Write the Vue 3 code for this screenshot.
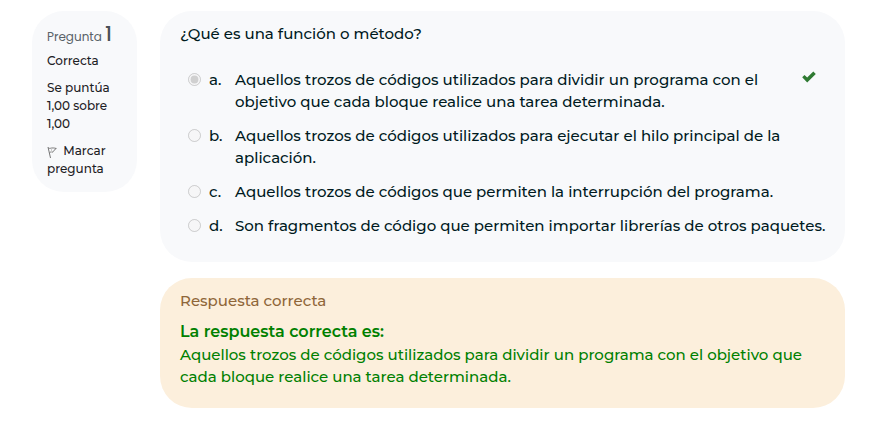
<script setup>
import { ref } from 'vue'

const selected = ref('a')
const options = [
  {
    key: 'a',
    text: 'Aquellos trozos de códigos utilizados para dividir un programa con el objetivo que cada bloque realice una tarea determinada.',
    correct: true,
  },
  {
    key: 'b',
    text: 'Aquellos trozos de códigos utilizados para ejecutar el hilo principal de la aplicación.',
  },
  {
    key: 'c',
    text: 'Aquellos trozos de códigos que permiten la interrupción del programa.',
  },
  {
    key: 'd',
    text: 'Son fragmentos de código que permiten importar librerías de otros paquetes.',
  },
]
</script>

<template>
  <main class="question">
    <aside class="info">
      <h3 class="title">Pregunta <span class="number">1</span></h3>
      <p class="state">Correcta</p>
      <p class="grade">Se puntúa 1,00 sobre 1,00</p>
      <a class="flag" href="#">
        <svg class="flag-icon" viewBox="0 0 10 13" aria-hidden="true">
          <path d="M1 1 3.500 12" />
          <path d="M1.300 2C3 3.200 4.500 1 9.300 2.500 7.500 3.500 6.500 5 5.800 6.200 4.800 5.600 3.500 5.800 2.500 6.800" />
          <path class="shade" d="M4.500 2.500V7" />
        </svg>
        Marcar pregunta
      </a>
    </aside>

    <div class="content">
      <section class="card formulation">
        <fieldset class="answers">
          <legend class="prompt">¿Qué es una función o método?</legend>
          <div v-for="option in options" :key="option.key" class="option">
            <input
              :id="'answer-' + option.key"
              v-model="selected"
              class="radio"
              type="radio"
              name="answer"
              :value="option.key"
              disabled
            />
            <label class="label" :for="'answer-' + option.key">
              <span class="letter">{{ option.key }}.</span>
              <span class="text">{{ option.text }}</span>
            </label>
            <svg v-if="option.correct" class="check" viewBox="0 0 14 12" role="img" aria-label="Correcta">
              <path d="M0.200 6.200 2.500 3.900 5.200 6.500 11.300 0.500 13.800 2.900 5.200 11.400Z" />
            </svg>
          </div>
        </fieldset>
      </section>

      <section class="card outcome">
        <h4 class="outcome-title">Respuesta correcta</h4>
        <p class="right-answer">
          <strong>La respuesta correcta es:</strong>
          <span>Aquellos trozos de códigos utilizados para dividir un programa con el objetivo que cada bloque realice una tarea determinada.</span>
        </p>
      </section>
    </div>
  </main>
</template>

<style>
body {
  background: #fff;
}
</style>

<style scoped>
.question {
  display: flex;
  align-items: flex-start;
  gap: 23px;
  padding: 11px 29px 16px 32px;
  font-family: Montserrat, Inter, sans-serif;
  font-size: 15px;
  font-weight: 500;
  line-height: 22px;
  color: #001a1e;
}

h3,
h4,
p {
  margin: 0;
  font-weight: 500;
}

.info {
  flex: 0 0 105px;
  box-sizing: border-box;
  padding: 11px 15px 14px;
  border-radius: 32px;
  background: #f8f9fb;
  font-size: 12px;
  line-height: 18px;
  color: #1d2125;
}

.title {
  margin-bottom: 3px;
  font-family: Poppins, Montserrat, Inter, sans-serif;
  font-size: 12px;
  line-height: 24px;
  font-weight: 400;
  color: #5a6268;
  white-space: nowrap;
}

.number {
  font-size: 20px;
  font-weight: 500;
  color: #495057;
}

.state,
.grade {
  margin-bottom: 9px;
}

.flag {
  display: block;
  color: inherit;
  text-decoration: none;
}

.flag-icon {
  width: 10px;
  height: 13px;
  margin-right: 3px;
  vertical-align: -4px;
  fill: none;
  stroke: #777;
  stroke-width: 1;
}

.shade {
  stroke: #ccc;
}

.content {
  flex: 1;
  min-width: 0;
  display: flex;
  flex-direction: column;
  gap: 16px;
}

.card {
  border-radius: 32px;
  padding: 12px 20px 20px;
}

.formulation {
  padding-right: 15px;
  padding-bottom: 13px;
  background: #f8f9fb;
}

.answers {
  min-width: 0;
  margin: 0;
  padding: 0;
  border: 0;
}

.prompt {
  margin-bottom: 24px;
  padding: 0;
}

.option {
  display: flex;
  align-items: flex-start;
  margin-bottom: 12px;
  padding-left: 8px;
}

.radio {
  flex: none;
  width: 13px;
  height: 13px;
  margin: 4px 8px 0 0;
}

.label {
  flex: 1;
  display: flex;
}

.letter {
  flex: 0 0 26px;
}

.check {
  flex: none;
  width: 14px;
  height: 12px;
  margin: 2px 14px 0 20px;
  fill: #2f7a32;
}

.outcome {
  background: #fcefdc;
}

.outcome-title {
  margin-bottom: 8px;
  font-size: 15px;
  color: #8f6639;
}

.right-answer {
  color: #008000;
}

.right-answer strong {
  display: block;
  font-size: 16px;
  line-height: 24px;
  font-weight: 600;
}
</style>
